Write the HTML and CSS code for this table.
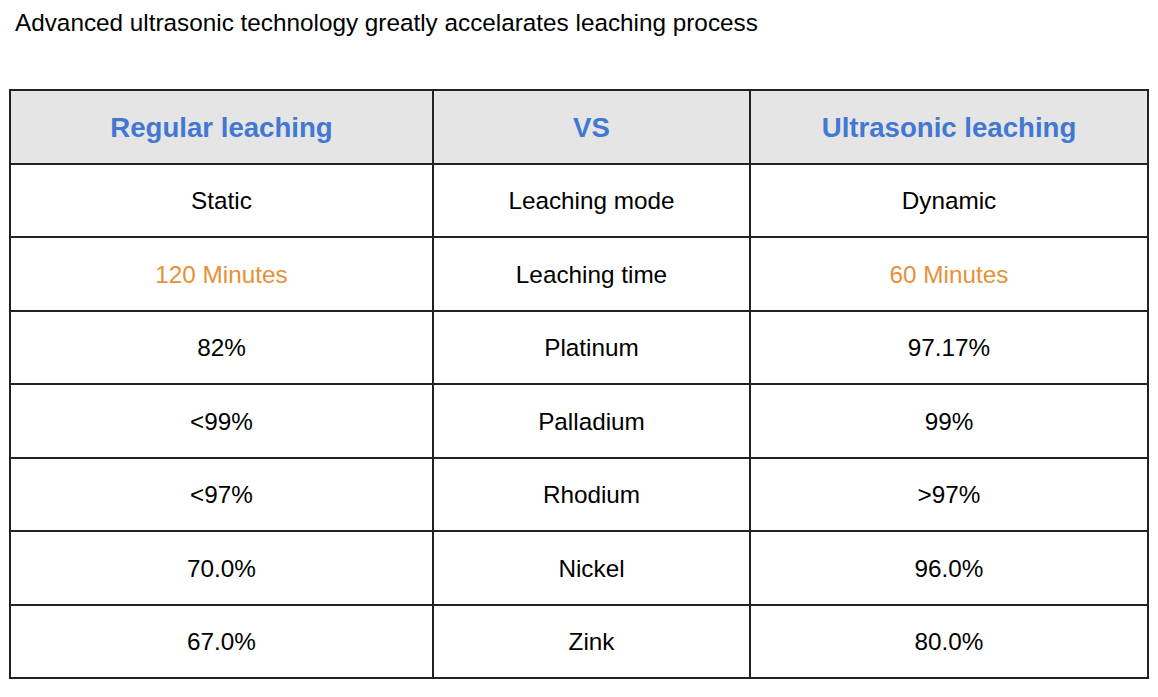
FILE: index.html
```html
<!DOCTYPE html>
<html>
<head>
<meta charset="utf-8">
<link rel="stylesheet" href="styles.css">
</head>
<body>
<p class="title">Advanced ultrasonic technology greatly accelarates leaching process</p>
<div class="table">
  <div class="cell head">Regular leaching</div>
  <div class="cell head">VS</div>
  <div class="cell head">Ultrasonic leaching</div>

  <div class="cell">Static</div>
  <div class="cell">Leaching mode</div>
  <div class="cell">Dynamic</div>

  <div class="cell orange">120 Minutes</div>
  <div class="cell">Leaching time</div>
  <div class="cell orange">60 Minutes</div>

  <div class="cell">82%</div>
  <div class="cell">Platinum</div>
  <div class="cell">97.17%</div>

  <div class="cell">&lt;99%</div>
  <div class="cell">Palladium</div>
  <div class="cell">99%</div>

  <div class="cell">&lt;97%</div>
  <div class="cell">Rhodium</div>
  <div class="cell">&gt;97%</div>

  <div class="cell">70.0%</div>
  <div class="cell">Nickel</div>
  <div class="cell">96.0%</div>

  <div class="cell">67.0%</div>
  <div class="cell">Zink</div>
  <div class="cell">80.0%</div>
</div>
</body>
</html>
```
FILE: styles.css
```css
html, body {
  margin: 0;
  padding: 0;
  background: #ffffff;
}
body {
  font-family: "Liberation Sans", Arial, sans-serif;
  color: #000000;
  font-size: 24.3px;
  line-height: 28px;
}
.title {
  margin: 0;
  padding: 8.5px 0 0 15px;
  height: 28px;
}
.table {
  margin: 52.5px 0 0 9px;
  width: 1140px;
  box-sizing: border-box;
  border-left: 2px solid #222222;
  border-top: 2px solid #222222;
  display: grid;
  grid-template-columns: 423px 317px 398px;
  grid-auto-rows: 73.5px;
}
.cell {
  box-sizing: border-box;
  border-right: 2px solid #222222;
  border-bottom: 2px solid #222222;
  padding-top: 2px;
  display: flex;
  align-items: center;
  justify-content: center;
  white-space: nowrap;
}
.head {
  background: #e5e5e5;
  color: #4278d2;
  font-weight: bold;
  font-size: 27.6px;
}
.orange {
  color: #e69138;
}
```
